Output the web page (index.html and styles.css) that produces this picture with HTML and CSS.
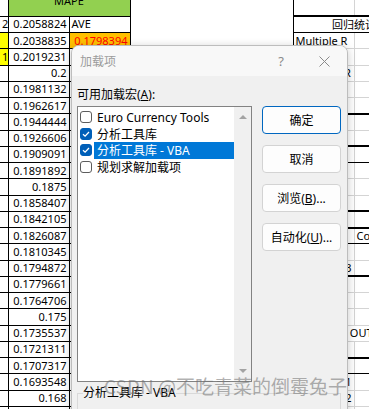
FILE: index.html
```html
<!DOCTYPE html>
<html lang="zh-CN">
<head>
    <meta charset="UTF-8">
    <meta name="viewport" content="width=device-width, initial-scale=1.0">
    <title>加载项</title>
    <link rel="stylesheet" href="styles.css">
</head>
<body>
    <table class="sheet">
        <colgroup>
            <col class="col-a"><col class="col-b"><col class="col-c"><col class="col-d"><col class="col-e"><col class="col-f">
        </colgroup>
        <tr class="thick first">
            <td class="a"></td>
            <td class="b green" colspan="2"><div class="cut"><span>MAPE</span></div></td>
            <td class="d"></td><td class="e"></td><td class="f"></td>
        </tr>
        <tr class="thin">
            <td class="a num">2</td><td class="b num">0.2058824</td><td class="c">AVE</td>
            <td class="d"></td><td class="e center" colspan="2">回归统计</td>
        </tr>
        <tr>
            <td class="a yellow"></td><td class="b num">0.2038835</td><td class="c num orange">0.1798394</td>
            <td class="d"></td><td class="e">Multiple R</td><td class="f"></td>
        </tr>
        <tr>
            <td class="a yellow num">1</td><td class="b num">0.2019231</td><td class="c"></td>
            <td class="d"></td><td class="e">R Square</td><td class="f"></td>
        </tr>
        <tr>
            <td class="a"></td><td class="b num">0.2</td><td class="c"></td>
            <td class="d"></td><td class="e">Adjusted R Square</td><td class="f"></td>
        </tr>
        <tr>
            <td class="a"></td><td class="b num">0.1981132</td><td class="c"></td>
            <td class="d"></td><td class="e">标准误差</td><td class="f"></td>
        </tr>
        <tr class="thick">
            <td class="a"></td><td class="b num">0.1962617</td><td class="c"></td>
            <td class="d"></td><td class="e">观测值</td><td class="f"></td>
        </tr>
        <tr>
            <td class="a"></td><td class="b num">0.1944444</td><td class="c"></td>
            <td class="d"></td><td class="e"></td><td class="f"></td>
        </tr>
        <tr class="thick">
            <td class="a"></td><td class="b num">0.1926606</td><td class="c"></td>
            <td class="d"></td><td class="e">方差分析</td><td class="f"></td>
        </tr>
        <tr class="thin">
            <td class="a"></td><td class="b num">0.1909091</td><td class="c"></td>
            <td class="d"></td><td class="e"></td><td class="f num">df</td>
        </tr>
        <tr>
            <td class="a"></td><td class="b num">0.1891892</td><td class="c"></td>
            <td class="d"></td><td class="e">回归分析</td><td class="f"></td>
        </tr>
        <tr>
            <td class="a"></td><td class="b num">0.1875</td><td class="c"></td>
            <td class="d"></td><td class="e">残差</td><td class="f"></td>
        </tr>
        <tr class="thick">
            <td class="a"></td><td class="b num">0.1858407</td><td class="c"></td>
            <td class="d"></td><td class="e">总计</td><td class="f"></td>
        </tr>
        <tr class="thick">
            <td class="a"></td><td class="b num">0.1842105</td><td class="c"></td>
            <td class="d"></td><td class="e"></td><td class="f"></td>
        </tr>
        <tr class="thin">
            <td class="a"></td><td class="b num">0.1826087</td><td class="c"></td>
            <td class="d"></td><td class="e"></td><td class="f">Coefficients</td>
        </tr>
        <tr>
            <td class="a"></td><td class="b num">0.1810345</td><td class="c"></td>
            <td class="d"></td><td class="e">Intercept</td><td class="f"></td>
        </tr>
        <tr class="thick">
            <td class="a"></td><td class="b num">0.1794872</td><td class="c"></td>
            <td class="d"></td><td class="e num">3</td><td class="f"></td>
        </tr>
        <tr>
            <td class="a"></td><td class="b num">0.1779661</td><td class="c"></td>
            <td class="d"></td><td class="e"></td><td class="f"></td>
        </tr>
        <tr>
            <td class="a"></td><td class="b num">0.1764706</td><td class="c"></td>
            <td class="d"></td><td class="e"></td><td class="f"></td>
        </tr>
        <tr>
            <td class="a"></td><td class="b num">0.175</td><td class="c"></td>
            <td class="d"></td><td class="e"></td><td class="f"></td>
        </tr>
        <tr>
            <td class="a"></td><td class="b num">0.1735537</td><td class="c"></td>
            <td class="d"></td><td class="e" colspan="2">RESIDUAL OUTPUT</td>
        </tr>
        <tr class="thick">
            <td class="a"></td><td class="b num">0.1721311</td><td class="c"></td>
            <td class="d"></td><td class="e"></td><td class="f"></td>
        </tr>
        <tr class="thin">
            <td class="a"></td><td class="b num">0.1707317</td><td class="c"></td>
            <td class="d"></td><td class="e">观测值</td><td class="f"></td>
        </tr>
        <tr>
            <td class="a"></td><td class="b num">0.1693548</td><td class="c"></td>
            <td class="d"></td><td class="e num">1</td><td class="f"></td>
        </tr>
        <tr>
            <td class="a"></td><td class="b num">0.168</td><td class="c"></td>
            <td class="d"></td><td class="e num">2</td><td class="f"></td>
        </tr>
        <tr>
            <td class="a"></td><td class="b num">0.1666667</td><td class="c"></td>
            <td class="d"></td><td class="e num">3</td><td class="f"></td>
        </tr>
    </table>

    <div class="dialog">
        <div class="titlebar">
            <span class="title">加载项</span>
            <span class="help">?</span>
            <span class="close">
                <svg width="11" height="11" viewBox="0 0 11 11"><path d="M0.5 0.5 10.5 10.5 M10.5 0.5 0.5 10.5" stroke="#8a8a8a" stroke-width="1" fill="none"/></svg>
            </span>
        </div>
        <div class="dialog-body">
            <div class="label">可用加载宏(<u>A</u>):</div>
            <div class="main">
                <div class="listbox">
                    <div class="items">
                        <div class="item"><span class="check"></span><span class="text">Euro Currency Tools</span></div>
                        <div class="item"><span class="check on"><svg width="10" height="10" viewBox="0 0 10 10"><path d="M2 5.2 4.1 7.2 8 3" fill="none" stroke="#fff" stroke-width="1.3"/></svg></span><span class="text">分析工具库</span></div>
                        <div class="item selected"><span class="check on"><svg width="10" height="10" viewBox="0 0 10 10"><path d="M2 5.2 4.1 7.2 8 3" fill="none" stroke="#fff" stroke-width="1.3"/></svg></span><span class="text">分析工具库 - VBA</span></div>
                        <div class="item"><span class="check"></span><span class="text">规划求解加载项</span></div>
                    </div>
                    <div class="scrollbar">
                        <span class="arrow up"></span>
                        <span class="arrow down"></span>
                    </div>
                </div>
                <div class="buttons">
                    <button class="btn default">确定</button>
                    <button class="btn">取消</button>
                    <button class="btn">浏览(<u>B</u>)...</button>
                    <button class="btn">自动化(<u>U</u>)...</button>
                </div>
            </div>
            <fieldset class="group">
                <legend>分析工具库 - VBA</legend>
            </fieldset>
        </div>
    </div>

    <div class="watermark">CSDN @不吃青菜的倒霉兔子</div>
</body>
</html>
```

FILE: styles.css
```css
html, body {
    margin: 0;
    padding: 0;
}
body {
    width: 369px;
    height: 409px;
    position: relative;
    overflow: hidden;
    background: #fff;
    font-family: "Noto Sans", "Noto Sans CJK SC", sans-serif;
}

/* spreadsheet behind the dialog */
.sheet {
    border-collapse: collapse;
    table-layout: fixed;
    width: 415px;
    font-size: 11px;
    color: #000;
}
.col-a { width: 8px; }
.col-b { width: 61px; }
.col-c { width: 61px; }
.col-d { width: 163px; }
.col-e { width: 61px; }
.col-f { width: 61px; }
.sheet tr { height: 16.25px; }
.sheet td {
    padding: 0 2px;
    line-height: 14px;
    white-space: nowrap;
    overflow: hidden;
}
.a, .b, .c { border: 1px solid #000; }
.a { border-left: 0; padding: 0 1px 0 0; }
.first td { border-top: 0; }
.d { border-right: 1px solid #000; }
.e, .f {
    border-bottom: 1px solid #d4d4d4;
    border-right: 1px solid #d4d4d4;
}
.e { padding-left: 4px; }
.thick .e, .thick .f { border-bottom: 2px solid #000; }
.thin .e, .thin .f { border-bottom: 1px solid #000; }
.num { text-align: right; }
.center { text-align: center; }
.green { background: #92d050; vertical-align: top; }
.yellow { background: #ffff00; }
.orange { background: #ffc000; color: #ff0000; }
.cut { height: 14px; overflow: hidden; }
.cut span {
    display: block;
    margin-top: -6px;
    text-align: center;
}

/* add-ins dialog */
.dialog {
    position: absolute;
    left: 71px;
    top: 45px;
    width: 277px;
    height: 380px;
    box-sizing: border-box;
    background: #f0f0f0;
    border: 1px solid #bdbdbd;
    border-radius: 8px 8px 0 0;
    box-shadow: 0 2px 10px rgba(0, 0, 0, 0.22);
    overflow: hidden;
    font-size: 12px;
    color: #000;
}
.titlebar {
    height: 30px;
    display: flex;
    align-items: center;
    background: #f8f8f8;
    padding-left: 8px;
}
.title { flex: 1; color: #9c9c9c; }
.help {
    width: 40px;
    text-align: center;
    color: #8a8a8a;
    font-size: 13px;
}
.close {
    width: 46px;
    display: flex;
    justify-content: center;
}
.dialog-body { padding: 11px 6px 0 5px; }
.label { line-height: 16px; margin-bottom: 3px; }
.main { display: flex; gap: 10px; }
.listbox {
    width: 175px;
    height: 276px;
    box-sizing: border-box;
    border: 1px solid #828282;
    background: #fff;
    display: flex;
}
.items { flex: 1; padding-top: 2px; }
.item {
    height: 16.5px;
    display: flex;
    align-items: center;
}
.check {
    width: 12px;
    height: 12px;
    box-sizing: border-box;
    margin-left: 2px;
    border: 1px solid #5c5c5c;
    border-radius: 3px;
    background: #fff;
    display: flex;
    align-items: center;
    justify-content: center;
}
.check.on { background: #005fb8; border-color: #005fb8; }
.item .text {
    margin-left: 2px;
    padding-left: 3px;
    flex: 1;
    height: 100%;
    display: flex;
    align-items: center;
}
.selected .text { background: #0078d7; color: #fff; }
.scrollbar {
    width: 17px;
    background: #f0f0f0;
    display: flex;
    flex-direction: column;
    justify-content: space-between;
    align-items: center;
    padding: 8px 0 8px;
    box-sizing: border-box;
}
.arrow {
    width: 0;
    height: 0;
    border-left: 4px solid transparent;
    border-right: 4px solid transparent;
}
.arrow.up { border-bottom: 4px solid #a3a3a3; }
.arrow.down { border-top: 4px solid #a3a3a3; }
.buttons {
    display: flex;
    flex-direction: column;
    gap: 11px;
}
.btn {
    width: 79px;
    height: 28px;
    padding: 0;
    background: #fdfdfd;
    border: 1px solid #d3d3d3;
    border-radius: 4px;
    font-family: "Noto Sans", "Noto Sans CJK SC", sans-serif;
    font-size: 12px;
    color: #000;
}
.btn.default { border-color: #0067c0; }
.group {
    margin: 3px 0 0 0;
    padding: 0 5px;
    height: 40px;
    border: 1px solid #d9d9d9;
}
.group legend {
    padding: 0;
    line-height: 16px;
    margin-top: 2px;
}

.watermark {
    position: absolute;
    left: 104px;
    top: 372px;
    font-family: "Noto Sans CJK SC", sans-serif;
    font-size: 19px;
    color: rgba(110, 110, 110, 0.55);
    white-space: nowrap;
}
```
